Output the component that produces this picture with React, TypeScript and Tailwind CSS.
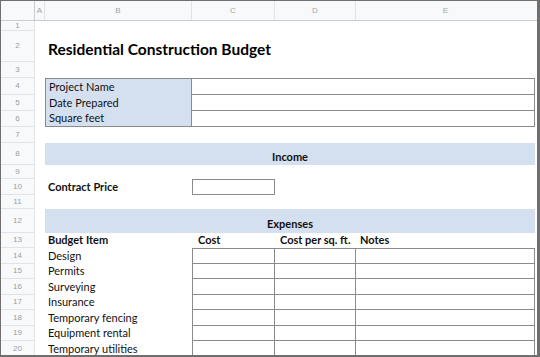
import React from "react";

const font = { fontFamily: "Lato, 'Open Sans', sans-serif" };

function Row({ n, h, children }: { n: number; h: string; children?: React.ReactNode }) {
  return (
    <div className={`flex ${h}`}>
      <div className="w-[34px] shrink-0 bg-[#f8f9fa] border-r border-b border-[#e1e3e6] flex items-center justify-center text-[8px] text-[#9a9ea2] [font-family:'Liberation_Sans',sans-serif]">
        {n}
      </div>
      <div className="w-[10px] shrink-0" />
      {children}
    </div>
  );
}

const items = [
  "Design",
  "Permits",
  "Surveying",
  "Insurance",
  "Temporary fencing",
  "Equipment rental",
  "Temporary utilities",
];
const itemHeights = ["h-[16px]", "h-[15px]", "h-[16px]", "h-[15px]", "h-[16px]", "h-[15px]", "h-[16px]"];

export default function App() {
  return (
    <div
      className="w-[540px] h-[357px] overflow-hidden bg-white border-l border-t border-r-[3px] border-b-[2px] border-[#6f6f6f] text-[11px] text-[#111]"
      style={font}
    >
      {/* column headers */}
      <div className="flex h-[20px] bg-[#f8f9fa] border-b border-[#c9ccd0] text-[8px] text-[#a0a4a8] [font-family:'Liberation_Sans',sans-serif]">
        <div className="w-[34px] shrink-0 border-r border-[#c9ccd0]" />
        <div className="w-[10px] shrink-0 border-r border-[#e1e3e6] flex items-center justify-center">A</div>
        <div className="w-[147px] shrink-0 border-r border-[#e1e3e6] flex items-center justify-center">B</div>
        <div className="w-[83px] shrink-0 border-r border-[#e1e3e6] flex items-center justify-center">C</div>
        <div className="w-[81px] shrink-0 border-r border-[#e1e3e6] flex items-center justify-center">D</div>
        <div className="w-[179px] shrink-0 flex items-center justify-center">E</div>
      </div>

      <Row n={1} h="h-[10px]" />
      <Row n={2} h="h-[31px]">
        <div className="flex-1 flex items-end pb-[1px] pl-[3px] text-[15.5px] font-bold text-black">
          Residential Construction Budget
        </div>
      </Row>
      <Row n={3} h="h-[16px]" />

      {[
        ["Project Name", "border-t", 4, "h-[17px]"],
        ["Date Prepared", "", 5, "h-[16px]"],
        ["Square feet", "border-b", 6, "h-[16px]"],
      ].map(([label, edge, n, h]) => (
        <Row key={n as number} n={n as number} h={h as string}>
          <div className={`w-[147px] shrink-0 bg-[#d4e0f0] border-l border-r border-[#8a8a8a] ${edge} flex items-center pl-[3px]`}>
            {label}
          </div>
          <div className={`w-[343px] shrink-0 border-r border-b border-[#8a8a8a] ${edge === "border-t" ? "border-t" : ""}`} />
        </Row>
      ))}

      <Row n={7} h="h-[16px]" />
      <Row n={8} h="h-[22px]">
        <div className="w-[490px] shrink-0 bg-[#d4e0f0] flex items-end justify-center font-bold">Income</div>
      </Row>
      <Row n={9} h="h-[14px]" />
      <Row n={10} h="h-[16px]">
        <div className="w-[147px] shrink-0 flex items-center pl-[3px] font-bold">Contract Price</div>
        <div className="w-[83px] shrink-0 border border-[#8a8a8a]" />
      </Row>
      <Row n={11} h="h-[14px]" />
      <Row n={12} h="h-[24px]">
        <div className="w-[490px] shrink-0 bg-[#d4e0f0] flex items-end justify-center pb-[1px] font-bold">Expenses</div>
      </Row>
      <Row n={13} h="h-[15px]">
        <div className="w-[147px] shrink-0 flex items-center pl-[3px] font-bold">Budget Item</div>
        <div className="w-[83px] shrink-0 flex items-center pl-[6px] font-bold">Cost</div>
        <div className="w-[81px] shrink-0 flex items-center pl-[5px] font-bold">Cost per sq. ft.</div>
        <div className="w-[179px] shrink-0 flex items-center pl-[4px] font-bold">Notes</div>
      </Row>

      {items.map((item, i) => (
        <Row key={item} n={14 + i} h={itemHeights[i]}>
          <div className="w-[147px] shrink-0 flex items-center pl-[3px]">{item}</div>
          <div className={`w-[83px] shrink-0 border-l border-r border-b border-[#8a8a8a] ${i === 0 ? "border-t" : ""}`} />
          <div className={`w-[81px] shrink-0 border-r border-b border-[#8a8a8a] ${i === 0 ? "border-t" : ""}`} />
          <div className={`w-[179px] shrink-0 border-r border-b border-[#8a8a8a] ${i === 0 ? "border-t" : ""}`} />
        </Row>
      ))}
    </div>
  );
}
